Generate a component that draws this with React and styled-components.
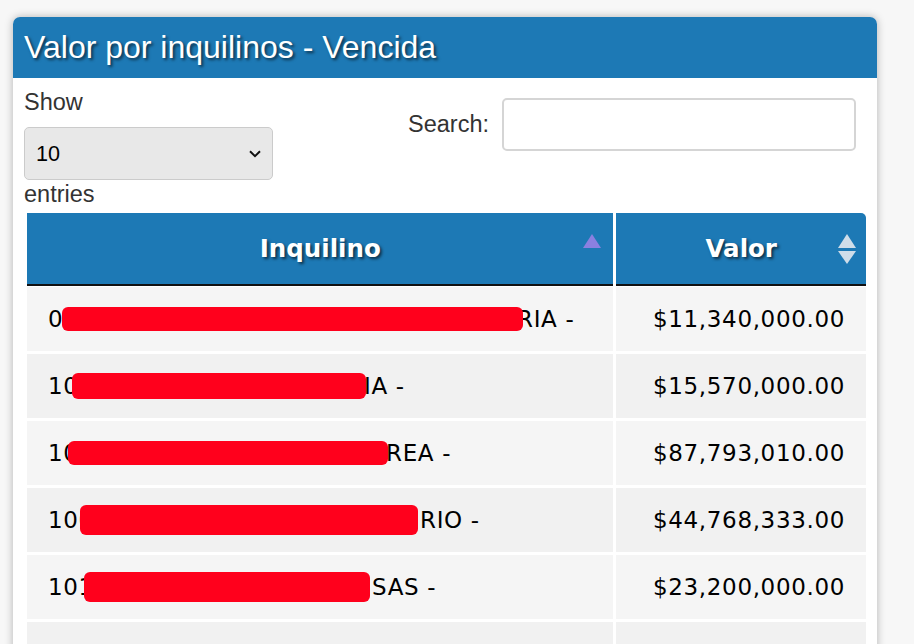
import React from "react";
import styled, { createGlobalStyle } from "styled-components";

const GlobalStyle = createGlobalStyle`
  html, body {
    margin: 0;
    background: #f7f7f7;
    overflow: hidden;
  }
  body {
    font-family: "Liberation Sans", Arial, sans-serif;
  }
`;

const TEXT_LEFT = 48; // x donde empieza el texto de la celda

const rows = [
  { pre: "0", bar: [62, 523], h: 24, post: "RIA -", postAt: 517, value: "$11,340,000.00" },
  { pre: "10", bar: [72, 366], h: 26, post: "IA -", postAt: 364, value: "$15,570,000.00" },
  { pre: "10", bar: [68, 388], h: 24, post: "REA -", postAt: 386, value: "$87,793,010.00" },
  { pre: "100", bar: [80, 418], h: 30, post: "RIO -", postAt: 420, value: "$44,768,333.00" },
  { pre: "101", bar: [84, 370], h: 30, post: "SAS -", postAt: 372, value: "$23,200,000.00" },
];

const SortIcon = ({ up, down, color }) => (
  <SortMark width="18" height="30" viewBox="0 0 18 30">
    {up && <polygon points="9,0 18,14 0,14" fill={color} />}
    {down && <polygon points="0,17 18,17 9,30" fill={color} />}
  </SortMark>
);

const App = () => {
  return (
    <>
      <GlobalStyle />
      <Page>
        <Card>
          <Heading>Valor por inquilinos - Vencida</Heading>
          <Body>
            <Controls>
              <LengthBlock>
                <div>Show</div>
                <SelectWrap>
                  <Select defaultValue="10">
                    <option value="10">10</option>
                    <option value="25">25</option>
                    <option value="50">50</option>
                    <option value="100">100</option>
                  </Select>
                  <Chevron width="12" height="8" viewBox="0 0 12 8">
                    <path d="M1 1.2 L6 6.2 L11 1.2" fill="none" stroke="#111" strokeWidth="2" />
                  </Chevron>
                </SelectWrap>
                <div>entries</div>
              </LengthBlock>
              <Filter>
                <label htmlFor="search">Search:</label>
                <SearchInput id="search" type="search" />
              </Filter>
            </Controls>

            <Table>
              <thead>
                <tr>
                  <Th $wide>
                    Inquilino
                    <SortIcon up color="#8a80e0" />
                  </Th>
                  <Th $last>
                    Valor
                    <SortIcon up down color="#cfdde9" />
                  </Th>
                </tr>
              </thead>
              <tbody>
                {rows.map((r, i) => (
                  <Tr key={i} $odd={i % 2 === 0}>
                    <Td>
                      <Name>
                        <Pre style={{ width: r.bar[0] - TEXT_LEFT }}>{r.pre}</Pre>
                        <Redact style={{ width: r.bar[1] - r.bar[0], height: r.h }} />
                        <span style={{ marginLeft: r.postAt - r.bar[1] }}>{r.post}</span>
                      </Name>
                    </Td>
                    <Td $right>{r.value}</Td>
                  </Tr>
                ))}
                <Tr>
                  <Td />
                  <Td />
                </Tr>
              </tbody>
            </Table>
          </Body>
        </Card>
      </Page>
    </>
  );
};

export default App;

/* -------------------- Styled Components -------------------- */
const Page = styled.div`
  height: 644px;
  box-sizing: border-box;
  padding: 17px 0 0 13px;
  overflow: hidden;
`;

const Card = styled.section`
  width: 864px;
  background: #fff;
  border-radius: 7px 7px 0 0;
  box-shadow: 0 0 8px rgba(0, 0, 0, 0.28);
  overflow: hidden;
`;

const Heading = styled.h2`
  margin: 0;
  height: 61px;
  padding-left: 11px;
  background: #1d79b5;
  color: #fff;
  font: 400 32px/61px "Liberation Sans", Arial, sans-serif;
  text-shadow: 2px 2px 3px rgba(0, 0, 0, 0.6);
`;

const Body = styled.div`
  padding: 10px 8px 0 11px;
`;

const Controls = styled.div`
  display: flex;
  justify-content: space-between;
  align-items: flex-start;
`;

const LengthBlock = styled.div`
  font-size: 23.5px;
  line-height: 28px;
  color: #333;
`;

const SelectWrap = styled.div`
  position: relative;
  width: 249px;
  height: 53px;
  margin-top: 11px;
`;

const Select = styled.select`
  appearance: none;
  width: 100%;
  height: 100%;
  box-sizing: border-box;
  padding: 0 0 0 11px;
  background: #e8e8e8;
  border: 1.5px solid #cbcbcb;
  border-radius: 5px;
  font: 400 21.6px "Liberation Sans", Arial, sans-serif;
  color: #000;
  outline: none;
`;

const Chevron = styled.svg`
  position: absolute;
  right: 12px;
  top: 23px;
  pointer-events: none;
`;

const Filter = styled.div`
  display: flex;
  align-items: center;
  gap: 13px;
  margin: 10px 13px 0 0;
  font-size: 23.5px;
  color: #333;
`;

const SearchInput = styled.input`
  width: 354px;
  height: 53px;
  box-sizing: border-box;
  border: 2px solid #d5d5d5;
  border-radius: 5px;
  background: #fff;
  outline: none;
`;

const Table = styled.table`
  margin-top: 2px;
  border-collapse: separate;
  border-spacing: 3px;
  font-family: "DejaVu Sans", Verdana, sans-serif;
`;

const Th = styled.th`
  position: relative;
  width: ${(p) => (p.$wide ? "587px" : "250px")};
  height: 71px;
  padding: 0;
  background: #1d79b5;
  color: #fff;
  font-size: 24.5px;
  font-weight: 700;
  text-align: center;
  text-shadow: 2px 2px 3px rgba(0, 0, 0, 0.6);
  box-shadow: 0 2px 0 #111;
  border-top-right-radius: ${(p) => (p.$last ? "5px" : "0")};

  svg {
    right: ${(p) => (p.$last ? "10px" : "12px")};
  }
`;

const SortMark = styled.svg`
  position: absolute;
  top: 21px;
`;

const Tr = styled.tr`
  background: ${(p) => (p.$odd ? "#f5f5f5" : "#f1f1f1")};
`;

const Td = styled.td`
  height: 64px;
  padding: 0 21px;
  font-size: 23px;
  letter-spacing: 0.65px;
  color: #000;
  text-align: ${(p) => (p.$right ? "right" : "left")};
  white-space: nowrap;
`;

const Name = styled.div`
  display: flex;
  align-items: center;
`;

const Pre = styled.span`
  flex: none;
  white-space: nowrap;
`;

const Redact = styled.span`
  position: relative;
  z-index: 1;
  flex: none;
  background: #ff001c;
  border-radius: 6px;
`;
